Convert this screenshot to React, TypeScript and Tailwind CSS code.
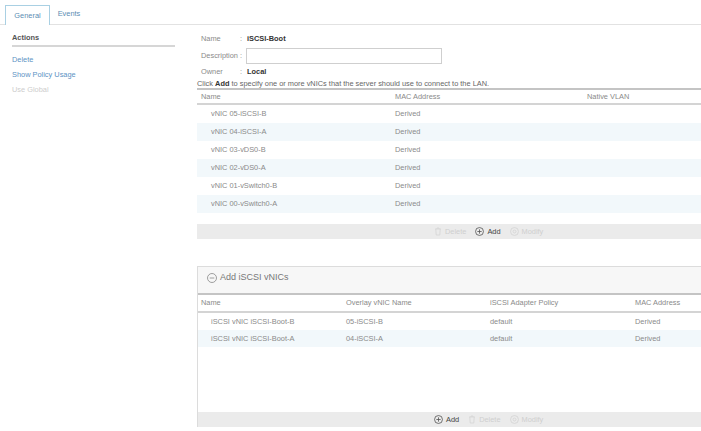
import React from "react";

const vnics = [
  "vNIC 05-iSCSI-B",
  "vNIC 04-iSCSI-A",
  "vNIC 03-vDS0-B",
  "vNIC 02-vDS0-A",
  "vNIC 01-vSwitch0-B",
  "vNIC 00-vSwitch0-A",
];

const iscsiVnics = [
  { name: "iSCSI vNIC iSCSI-Boot-B", overlay: "05-iSCSI-B", policy: "default", mac: "Derived" },
  { name: "iSCSI vNIC iSCSI-Boot-A", overlay: "04-iSCSI-A", policy: "default", mac: "Derived" },
];

const PlusCircle = () => (
  <svg width="9" height="9" viewBox="0 0 10 10" fill="none" stroke="#555" strokeWidth="0.9">
    <circle cx="5" cy="5" r="4.4" />
    <path d="M5 2.6v4.8M2.6 5h4.8" />
  </svg>
);

const MinusCircle = () => (
  <svg width="10" height="10" viewBox="0 0 10 10" fill="none" stroke="#888" strokeWidth="0.8">
    <circle cx="5" cy="5" r="4.5" />
    <path d="M2.7 5h4.6" />
  </svg>
);

const TrashIcon = () => (
  <svg width="8" height="9" viewBox="0 0 8 9" fill="none" stroke="#d4d4d4" strokeWidth="0.8">
    <path d="M1 2h6M3 2V1h2v1M1.8 2l.4 6h3.6l.4-6" />
  </svg>
);

const ModifyIcon = () => (
  <svg width="9" height="9" viewBox="0 0 10 10" fill="none" stroke="#d4d4d4" strokeWidth="0.9">
    <circle cx="5" cy="5" r="4.4" />
    <circle cx="5" cy="5" r="1.6" />
  </svg>
);

const ActionBar = ({ addFirst }: { addFirst?: boolean }) => {
  const del = (
    <span className="flex items-center gap-[3px] text-[#cfcfcf]">
      <TrashIcon />
      Delete
    </span>
  );
  const add = (
    <span className="flex items-center gap-[3px] text-[#444]">
      <PlusCircle />
      Add
    </span>
  );
  return (
    <div className={`h-[15px] bg-[#ebebeb] flex items-center gap-[9px] ${addFirst ? "pl-[236px]" : "pl-[237px]"}`}>
      {addFirst ? add : del}
      {addFirst ? del : add}
      <span className="flex items-center gap-[3px] text-[#cfcfcf]">
        <ModifyIcon />
        Modify
      </span>
    </div>
  );
};

export default function App() {
  return (
    <div
      className="w-[701px] h-[431px] bg-white overflow-hidden text-[7.4px] text-[#8a8a8a]"
      style={{ fontFamily: "'Liberation Sans', Arial, sans-serif" }}
    >
      {/* tabs */}
      <div className="h-[25px] border-b border-[#e2e2e2] flex items-end pl-[5px]">
        <div className="h-[20px] w-[45px] -mb-px border border-b-0 border-[#a9d0e3] bg-white flex items-center justify-center text-[#5b8db3]">
          General
        </div>
        <div className="h-[20px] w-[38px] flex items-center justify-center text-[#5b8db3]">
          Events
        </div>
      </div>

      <div className="flex">
        {/* actions */}
        <div className="w-[197px] shrink-0 pl-[12px] pt-[8px]">
          <div className="w-[163px] h-[14px] border-b-2 border-[#d6d6d6] text-[#555] font-bold leading-[10px]">
            Actions
          </div>
          <div className="pt-[5px] flex flex-col leading-[15px]">
            <span className="text-[#5d93c4]">Delete</span>
            <span className="text-[#5d93c4]">Show Policy Usage</span>
            <span className="text-[#cdcdcd]">Use Global</span>
          </div>
        </div>

        {/* main */}
        <div className="flex-1 pt-[7px]">
          <div className="pl-[4px]">
            <div className="h-[14px] flex items-center">
              <span className="w-[39px]">Name</span>
              <span className="w-[7px]">:</span>
              <span className="font-bold text-[#333]">iSCSI-Boot</span>
            </div>
            <div className="h-[19px] flex items-center">
              <span className="w-[45px]">Description :</span>
              <div className="w-[196px] h-[16px] border border-[#cfcfcf] bg-white" />
            </div>
            <div className="h-[13px] flex items-center">
              <span className="w-[39px]">Owner</span>
              <span className="w-[7px]">:</span>
              <span className="font-bold text-[#333]">Local</span>
            </div>
          </div>
          <div className="h-[10px] leading-[12px] text-[#666]">
            Click <b className="text-[#333]">Add</b> to specify one or more vNICs that the server should use to connect to the LAN.
          </div>

          {/* vNIC table */}
          <div className="border-t-2 border-[#c4c4c4]">
            <div className="grid grid-cols-[194px_192px_1fr] h-[15px] items-center border-b-2 border-[#d4d4d4]">
              <span className="pl-[4px]">Name</span>
              <span className="pl-[4px]">MAC Address</span>
              <span className="pl-[4px]">Native VLAN</span>
            </div>
            {vnics.map((v, i) => (
              <div
                key={v}
                className={`grid grid-cols-[194px_192px_1fr] h-[18px] items-center ${i % 2 === 1 ? "bg-[#f2f8fb]" : "bg-white"}`}
              >
                <span className="pl-[14px]">{v}</span>
                <span className="pl-[4px]">Derived</span>
                <span />
              </div>
            ))}
          </div>
          <div className="h-[11px]" />
          <ActionBar />

          <div className="h-[27px]" />

          {/* iSCSI vNICs */}
          <div className="border-t border-l border-[#dcdcdc]">
            <div className="h-[26px] pb-[5px] bg-[#f7f7f7] flex items-center gap-[3px] pl-[9px] text-[9px] text-[#777]">
              <MinusCircle />
              Add iSCSI vNICs
            </div>
            <div className="border-t-2 border-[#c4c4c4]">
              <div className="grid grid-cols-[144px_144px_145px_1fr] h-[18px] items-center border-b-2 border-[#d4d4d4]">
                <span className="pl-[3px]">Name</span>
                <span className="pl-[4px]">Overlay vNIC Name</span>
                <span className="pl-[4px]">iSCSI Adapter Policy</span>
                <span className="pl-[4px]">MAC Address</span>
              </div>
              {iscsiVnics.map((v, i) => (
                <div
                  key={v.name}
                  className={`grid grid-cols-[144px_144px_145px_1fr] h-[17px] items-center ${i % 2 === 1 ? "bg-[#f2f8fb]" : "bg-white"}`}
                >
                  <span className="pl-[13px]">{v.name}</span>
                  <span className="pl-[4px]">{v.overlay}</span>
                  <span className="pl-[4px]">{v.policy}</span>
                  <span className="pl-[4px]">{v.mac}</span>
                </div>
              ))}
            </div>
            <div className="h-[65px]" />
            <ActionBar addFirst />
          </div>
        </div>
      </div>
    </div>
  );
}
